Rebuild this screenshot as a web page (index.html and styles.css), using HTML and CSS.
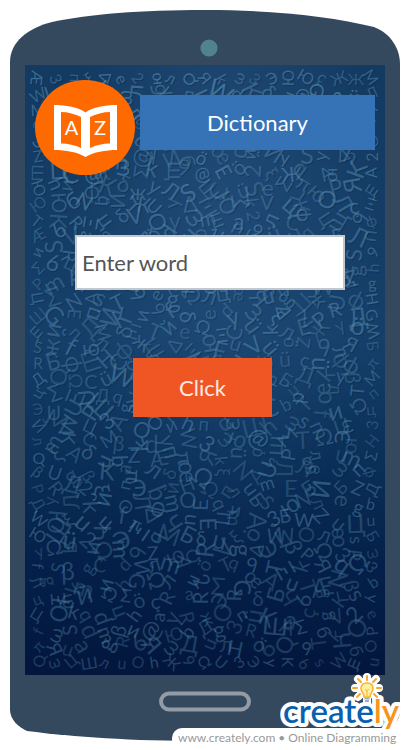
FILE: index.html
```html
<!DOCTYPE html>
<html lang="en">
<head>
<meta charset="utf-8">
<meta name="viewport" content="width=device-width, initial-scale=1">
<title>Dictionary</title>
<link rel="stylesheet" href="styles.css">
</head>
<body>
<div class="phone">
  <svg class="phone-cap" viewBox="0 0 390 55" preserveAspectRatio="none" aria-hidden="true">
    <path class="shell" d="M0 55V52C0 32 18 18 42 12C80 4 130 0 195 0C260 0 320 6 364 17C382 24 390 40 390 54V55Z"/>
    <circle class="camera" cx="199" cy="38" r="8.6"/>
  </svg>
  <main class="screen">
    <svg class="wallpaper" id="wallpaper" aria-hidden="true"></svg>
    <header class="topbar">
      <svg class="app-logo" viewBox="0 0 100 95" role="img" aria-label="A to Z book">
        <ellipse class="logo-disc" cx="50" cy="47.5" rx="50" ry="47.5"/>
        <path class="logo-book" fill-rule="evenodd" d="M19 25C31 25 43 27 50.500 32.500C58 27 70 25 82 25V70C70 70 59 72 50.500 77C42 72 31 70 19 70ZM26 32V63.500C33 63.500 40 65 46 68V37C40 34 33 32 26 32ZM75 32C68 32 61 34 55 37V68C61 65 68 63.500 75 63.500Z"/>
        <text class="logo-letter" x="36.500" y="55" text-anchor="middle">A</text>
        <text class="logo-letter" x="65" y="55" text-anchor="middle">Z</text>
      </svg>
      <h1 class="title">Dictionary</h1>
    </header>
    <form class="lookup">
      <input class="word" type="text" placeholder="Enter word" aria-label="Enter word">
      <button class="go" type="button">Click</button>
    </form>
  </main>
  <svg class="phone-foot" viewBox="0 0 390 66" preserveAspectRatio="none" aria-hidden="true">
    <path class="shell" d="M0 0H390V36C390 46 382 53 372 57C320 63 260 66 195 66C120 66 65 62 17 56C8 52 0 44 0 35Z"/>
    <rect class="home" x="151" y="18.500" width="88" height="16" rx="8"/>
  </svg>
</div>
<footer class="credit">
  <svg class="brand" viewBox="0 0 130 66" role="img" aria-label="creately">
    <path class="halo" d="M87 31V17M78 6L82 10M96 6L92 10M87 4V8M75 15H79M95 15H99M78 24L81 21M96 24L93 21"/>
    <text class="brand-halo" x="3" y="50">creately</text>
    <path class="rays" d="M87 3V7M78 6L81 9M96 6L93 9M73 15H77M97 15H101M77 24L80 21M97 24L94 21"/>
    <path class="bulb" d="M84 24C84 20 81 19 81 15.500C81 12 83.500 10 87 10C90.500 10 93 12 93 15.500C93 19 90 20 90 24Z"/>
    <path class="filament" d="M85 16L87 18L89 16M87 18V23"/>
    <path class="socket" d="M84.500 25.500H89.500M85 28H89"/>
    <text class="brand-text" x="3" y="50">create<tspan class="brand-end">ly</tspan></text>
  </svg>
  <p class="credit-line">www.creately.com • Online Diagramming</p>
</footer>
<script src="wallpaper.js"></script>
</body>
</html>
```
FILE: styles.css
```css
* { box-sizing: border-box; }

body {
  margin: 0;
  padding: 10px 10px 9px;
  position: relative;
  background: #fff;
  font-family: Lato, "Liberation Sans", sans-serif;
}

.phone {
  display: grid;
  grid-template-rows: 55px auto 66px;
}

.phone-cap,
.phone-foot {
  display: block;
  width: 100%;
  height: 100%;
}

.shell { fill: #34495e; }
.camera { fill: #50838e; }
.home { fill: none; stroke: #929ba6; stroke-width: 4; }

.screen {
  position: relative;
  min-height: 610px;
  margin: 0 15px;
  padding: 15px 10px;
  background:
    radial-gradient(ellipse at 55% 22%, rgba(50, 95, 145, 0.4), transparent 55%),
    linear-gradient(#133a61 0%, #153f69 45%, #0a2f58 65%, #04204a 82%, #03163c 100%);
  box-shadow: -15px 0 #34495e, 15px 0 #34495e;
}

.wallpaper {
  position: absolute;
  inset: 0;
  width: 100%;
  height: 100%;
}

.glyph {
  font-family: Lato, "Noto Sans", "DejaVu Sans", sans-serif;
  text-anchor: middle;
  fill: #6299bd;
}

.glyph-shade {
  fill: #03193a;
}

.topbar {
  position: relative;
  display: flex;
  align-items: flex-start;
  gap: 5px;
}

.app-logo {
  flex: none;
  width: 100px;
  height: 95px;
}

.logo-disc { fill: #ff6a00; }
.logo-book { fill: #fff; }

.logo-letter {
  font: 20px Lato, "Liberation Sans", sans-serif;
  fill: #fff;
}

.title {
  flex: 1;
  margin: 15px 0 0;
  background: #3672b6;
  color: #fff;
  font-size: 22px;
  font-weight: 400;
  line-height: 55px;
  text-align: center;
}

.lookup {
  position: relative;
  display: flex;
  flex-direction: column;
  align-items: center;
  gap: 68px;
  padding: 60px 30px 0 40px;
}

.word {
  width: 100%;
  height: 55px;
  padding: 0 5px;
  border: 2px solid #c4c7cb;
  border-radius: 0;
  background: #fff;
  color: #555;
  font: 22px Lato, sans-serif;
}

.word::placeholder {
  color: #555;
  opacity: 1;
}

.go {
  width: 139px;
  height: 59px;
  margin-right: 15px;
  border: 0;
  background: #f05624;
  color: #ffe9e0;
  font: 22px Lato, sans-serif;
}

.credit {
  position: absolute;
  right: 0;
  bottom: 0;
  width: 238px;
}

.credit-line {
  margin: 0;
  padding: 0 6px;
  border-radius: 10px 0 0 10px;
  background: #fff;
  color: #999;
  font-size: 12px;
  line-height: 19px;
  height: 22px;
  white-space: nowrap;
}

.brand {
  position: absolute;
  right: 0;
  bottom: 11px;
  width: 130px;
  height: 66px;
}

.halo {
  fill: none;
  stroke: #fff;
  stroke-width: 8;
  stroke-linecap: round;
}

.brand-halo,
.brand-text {
  font: 600 33px Lato, sans-serif;
}

.brand-halo {
  fill: #fff;
  stroke: #fff;
  stroke-width: 8;
  stroke-linejoin: round;
}

.brand-text { fill: #0a5fae; }
.brand-end { fill: #f7941e; }
.rays { fill: none; stroke: #f9a72b; stroke-width: 2; stroke-linecap: round; }
.bulb { fill: #fff0a0; stroke: #f9b233; stroke-width: 1.5; }
.filament { fill: none; stroke: #f9b233; }
.socket { fill: none; stroke: #a4adb5; stroke-width: 2; }
```
FILE: wallpaper.js
```js
// Scatters letters from several alphabets over the screen background.
const svg = document.getElementById("wallpaper");
const letters = Array.from("AбSЖeωΣCйgΔHфQyTЮβOЯkπMлdΞ9РsЧuRщaЭhΩиZБ6NцqδVюGШЙbEξДfœUпÆжmЦ3Kл@WΨö2Лçü");
let seed = 41;
function random() {
  seed = (seed * 16807) % 2147483647;
  return seed / 2147483647;
}
function addGlyph(char, x, y, size, angle, opacity, className) {
  const node = document.createElementNS("http://www.w3.org/2000/svg", "text");
  node.setAttribute("class", className);
  node.setAttribute("font-size", size);
  node.setAttribute("opacity", opacity);
  node.setAttribute("transform", `translate(${x} ${y}) rotate(${angle})`);
  node.setAttribute("y", Math.round(size * 0.35));
  node.textContent = char;
  svg.append(node);
}
const box = svg.getBoundingClientRect();
const inset = 13;
const columns = Math.round((box.width - 2 * inset) / 17);
const rows = Math.round((box.height - 2 * inset) / 16);
const stepX = (box.width - 2 * inset) / columns;
const stepY = (box.height - 2 * inset) / rows;
for (let row = 0; row <= rows; row++) {
  for (let col = 0; col <= columns; col++) {
    const atEdge = row === 0 || col === 0 || row === rows || col === columns;
    const shift = (random() - 0.5) * (atEdge ? 2 : 10);
    const lift = (random() - 0.5) * (atEdge ? 2 : 10);
    const x = Math.round(inset + col * stepX + shift);
    const y = Math.round(inset + row * stepY + lift);
    const size = atEdge ? 16 : 18 + Math.floor(random() * 8);
    const angle = Math.round(random() * 200 - 100);
    const char = letters[Math.floor(random() * letters.length)];
    const strength = (0.36 + random() * 0.2) * (1 - 0.35 * y / box.height);
    addGlyph(char, x + 1, y + 1, size, angle, 0.25, "glyph glyph-shade");
    addGlyph(char, x, y, size, angle, strength.toFixed(2), "glyph");
  }
}
```
